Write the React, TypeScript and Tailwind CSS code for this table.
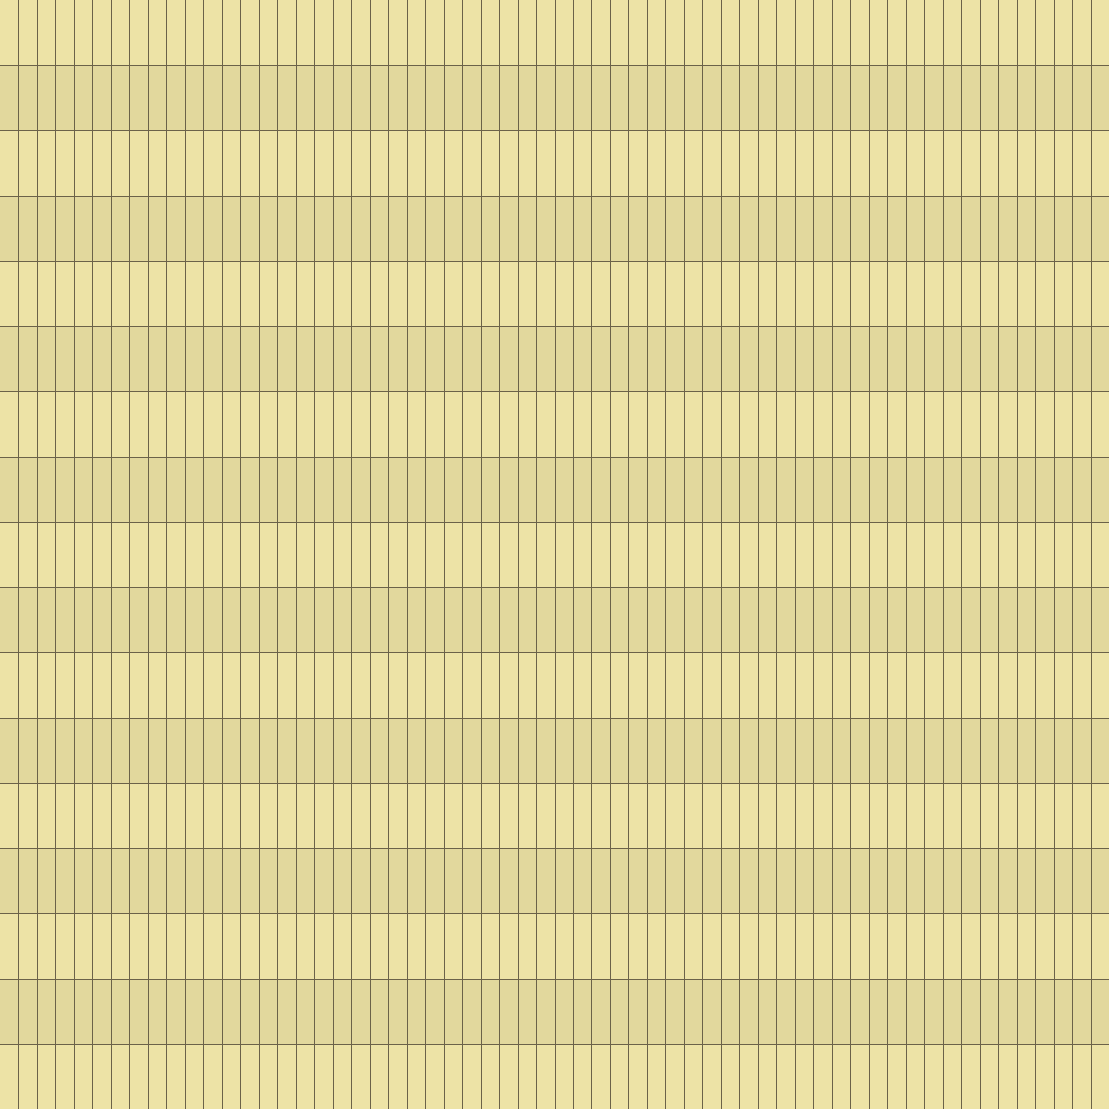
import React from "react";

const ROWS = 17;
const COLS = 60;

export default function App() {
  const cells: React.ReactNode[] = [];
  for (let r = 0; r < ROWS; r++) {
    for (let c = 0; c < COLS; c++) {
      const dark = r % 2 === 1;
      cells.push(
        <div
          key={`${r}-${c}`}
          className={`${dark ? "bg-[#e2d89d]" : "bg-[#ede3a6]"} ${c > 0 ? "border-l border-l-[#6b6249]" : ""} ${r > 0 ? "border-t border-t-[#6b6249]" : ""}`}
        />
      );
    }
  }
  return (
    <div className="w-[1109px] h-[1109px] overflow-hidden bg-[#ede3a6]">
      <div className="grid w-full h-full grid-cols-[repeat(60,minmax(0,1fr))] grid-rows-[repeat(17,minmax(0,1fr))]">
        {cells}
      </div>
    </div>
  );
}
